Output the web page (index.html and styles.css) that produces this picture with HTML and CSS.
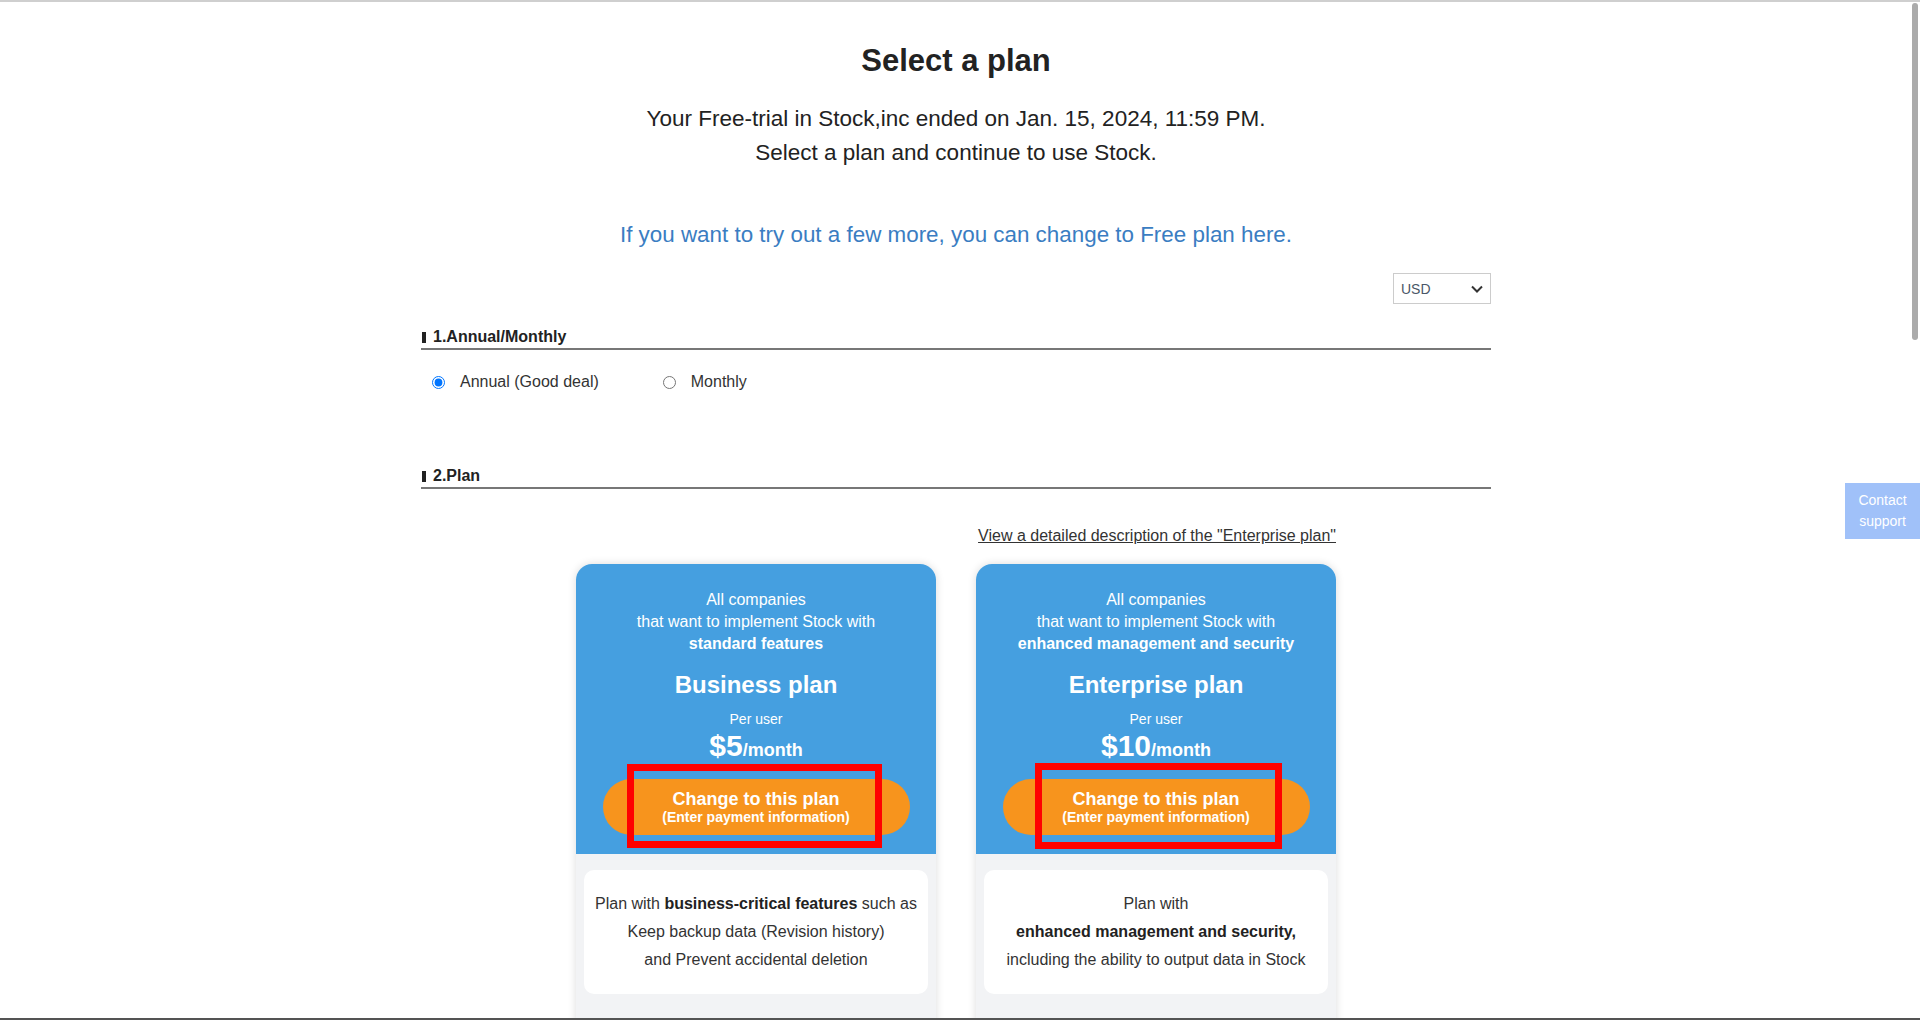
FILE: index.html
```html
<!DOCTYPE html>
<html lang="en">
<head>
    <meta charset="UTF-8">
    <meta name="viewport" content="width=device-width, initial-scale=1.0">
    <title>Select a plan</title>
    <link rel="stylesheet" href="styles.css">
</head>
<body>
    <div class="frame-top"></div>

    <div class="page">
        <h1 class="title">Select a plan</h1>
        <p class="lead">Your Free-trial in Stock,inc ended on Jan. 15, 2024, 11:59 PM.<br>Select a plan and continue to use Stock.</p>
        <p class="free-note"><a href="#" class="free-link">If you want to try out a few more, you can change to Free plan here.</a></p>

        <div class="currency-row">
            <div class="currency">
                <span>USD</span>
                <svg width="12" height="8" viewBox="0 0 12 8"><path d="M1 1.5l5 5 5-5" fill="none" stroke="#333" stroke-width="2"/></svg>
            </div>
        </div>

        <h2 class="step-title">1.Annual/Monthly</h2>
        <div class="billing">
            <label><input type="radio" name="term" checked>Annual (Good deal)</label>
            <label><input type="radio" name="term">Monthly</label>
        </div>

        <h2 class="step-title step-plan">2.Plan</h2>

        <div class="plans-wrap">
            <a href="#" class="detail-link">View a detailed description of the "Enterprise plan"</a>

            <div class="plans">
                <div class="plan-card">
                    <div class="plan-head">
                        <p class="plan-target">All companies<br>that want to implement Stock with<br><strong>standard features</strong></p>
                        <h3 class="plan-name">Business plan</h3>
                        <p class="plan-per">Per user</p>
                        <p class="plan-price"><span class="amount">$5</span>/month</p>
                        <button class="plan-btn">Change to this plan<small>(Enter payment information)</small></button>
                    </div>
                    <div class="plan-body">
                        <div class="plan-desc">Plan with <strong>business-critical features</strong> such as<br>Keep backup data (Revision history)<br>and Prevent accidental deletion</div>
                    </div>
                    <div class="mark mark-business"></div>
                </div>

                <div class="plan-card">
                    <div class="plan-head">
                        <p class="plan-target">All companies<br>that want to implement Stock with<br><strong>enhanced management and security</strong></p>
                        <h3 class="plan-name">Enterprise plan</h3>
                        <p class="plan-per">Per user</p>
                        <p class="plan-price"><span class="amount">$10</span>/month</p>
                        <button class="plan-btn">Change to this plan<small>(Enter payment information)</small></button>
                    </div>
                    <div class="plan-body">
                        <div class="plan-desc">Plan with<br><strong>enhanced management and security,</strong><br>including the ability to output data in Stock</div>
                    </div>
                    <div class="mark mark-enterprise"></div>
                </div>
            </div>
        </div>
    </div>

    <div class="support">Contact<br>support</div>
    <div class="scroll-thumb"></div>
    <div class="frame-bottom"></div>
</body>
</html>
```

FILE: styles.css
```css
body {
    margin: 0;
    padding-right: 8px;
    font-family: "Liberation Sans", Arial, sans-serif;
    color: #222;
    background: #fff;
}

.frame-top {
    position: fixed;
    top: 0;
    left: 0;
    width: 100%;
    height: 2px;
    background: #cfcfcf;
    z-index: 10;
}

.frame-bottom {
    position: fixed;
    bottom: 0;
    left: 0;
    width: 100%;
    height: 2px;
    background: #545454;
    z-index: 10;
}

.scroll-thumb {
    position: fixed;
    top: 3px;
    right: 2px;
    width: 6px;
    height: 337px;
    border-radius: 3px;
    background: #ababab;
    z-index: 10;
}

.page {
    width: 1070px;
    margin: 0 auto;
    padding-top: 41px;
    min-height: 3078px;
    box-sizing: border-box;
}

.title {
    margin: 0;
    font-size: 31px;
    line-height: 40px;
    text-align: center;
    font-weight: bold;
}

.lead {
    margin: 21px 0 0;
    font-size: 22.5px;
    line-height: 34px;
    text-align: center;
}

.free-note {
    margin: 48px 0 0;
    font-size: 22.4px;
    line-height: 34px;
    text-align: center;
}

.free-link {
    color: #3a7dc2;
    text-decoration: none;
}

.currency-row {
    display: flex;
    justify-content: flex-end;
    margin-top: 21px;
}

.currency {
    width: 98px;
    height: 31px;
    box-sizing: border-box;
    border: 1px solid #ccc;
    display: flex;
    align-items: center;
    justify-content: space-between;
    padding: 0 7px 0 7px;
    font-size: 14px;
    color: #4a5768;
}

.step-title {
    margin: 23px 0 0;
    padding-bottom: 1px;
    font-size: 16px;
    line-height: 20px;
    font-weight: bold;
    border-bottom: 2px solid #777;
}

.step-title::before {
    content: "";
    display: inline-block;
    width: 4px;
    height: 11px;
    margin: 0 7px 0 1px;
    background: #222;
    vertical-align: middle;
}

.step-plan {
    margin-top: 74px;
}

.billing {
    display: flex;
    gap: 64px;
    margin-top: 22px;
    padding-left: 11px;
    font-size: 16px;
    line-height: 20px;
    color: #333;
}

.billing label {
    display: flex;
    align-items: center;
    gap: 15px;
}

.billing input {
    margin: 0;
    width: 13px;
    height: 13px;
}

.plans-wrap {
    width: 760px;
    margin: 37px auto 0;
}

.detail-link {
    display: block;
    text-align: right;
    font-size: 16px;
    line-height: 20px;
    color: #333;
    text-decoration: underline;
}

.plans {
    display: flex;
    gap: 40px;
    margin-top: 18px;
}

.plan-card {
    position: relative;
    width: 360px;
    border-radius: 16px 16px 0 0;
    box-shadow: 0 0 8px rgba(0, 0, 0, 0.14);
}

.plan-head {
    background: #459fe0;
    color: #fff;
    text-align: center;
    padding: 25px 0 19px;
    border-radius: 16px 16px 0 0;
}

.plan-target {
    margin: 0;
    font-size: 16px;
    line-height: 22px;
}

.plan-name {
    margin: 15px 0 0;
    font-size: 24px;
    line-height: 30px;
}

.plan-per {
    margin: 9px 0 0;
    font-size: 14px;
    line-height: 20px;
}

.plan-price {
    margin: 0;
    font-size: 18px;
    line-height: 34px;
    font-weight: bold;
}

.plan-price .amount {
    font-size: 30px;
}

.plan-btn {
    display: block;
    width: 307px;
    height: 56px;
    margin: 12px auto 0;
    padding: 0;
    border: 0;
    border-radius: 28px;
    background: #f7941d;
    color: #fff;
    font-family: inherit;
    font-size: 18px;
    line-height: 20px;
    font-weight: bold;
}

.plan-btn small {
    display: block;
    font-size: 14px;
    line-height: 16px;
}

.plan-body {
    background: #f2f3f5;
    padding: 16px 8px 24px;
    min-height: 400px;
}

.plan-desc {
    background: #fff;
    border-radius: 10px;
    padding: 20px 0;
    text-align: center;
    font-size: 16px;
    line-height: 28px;
    color: #333;
}

.plan-desc strong {
    color: #222;
}

/* red highlight boxes drawn over the buttons */
.mark {
    position: absolute;
    box-sizing: border-box;
    border: 7px solid #f00;
}

.mark-business {
    left: 51px;
    top: 200px;
    width: 255px;
    height: 84px;
}

.mark-enterprise {
    left: 59px;
    top: 199px;
    width: 247px;
    height: 86px;
}

.support {
    position: fixed;
    right: 0;
    top: 483px;
    width: 75px;
    height: 56px;
    display: flex;
    align-items: center;
    justify-content: center;
    text-align: center;
    background: #a0c1f9;
    color: #fff;
    font-size: 14px;
    line-height: 21px;
    z-index: 11;
}
```
